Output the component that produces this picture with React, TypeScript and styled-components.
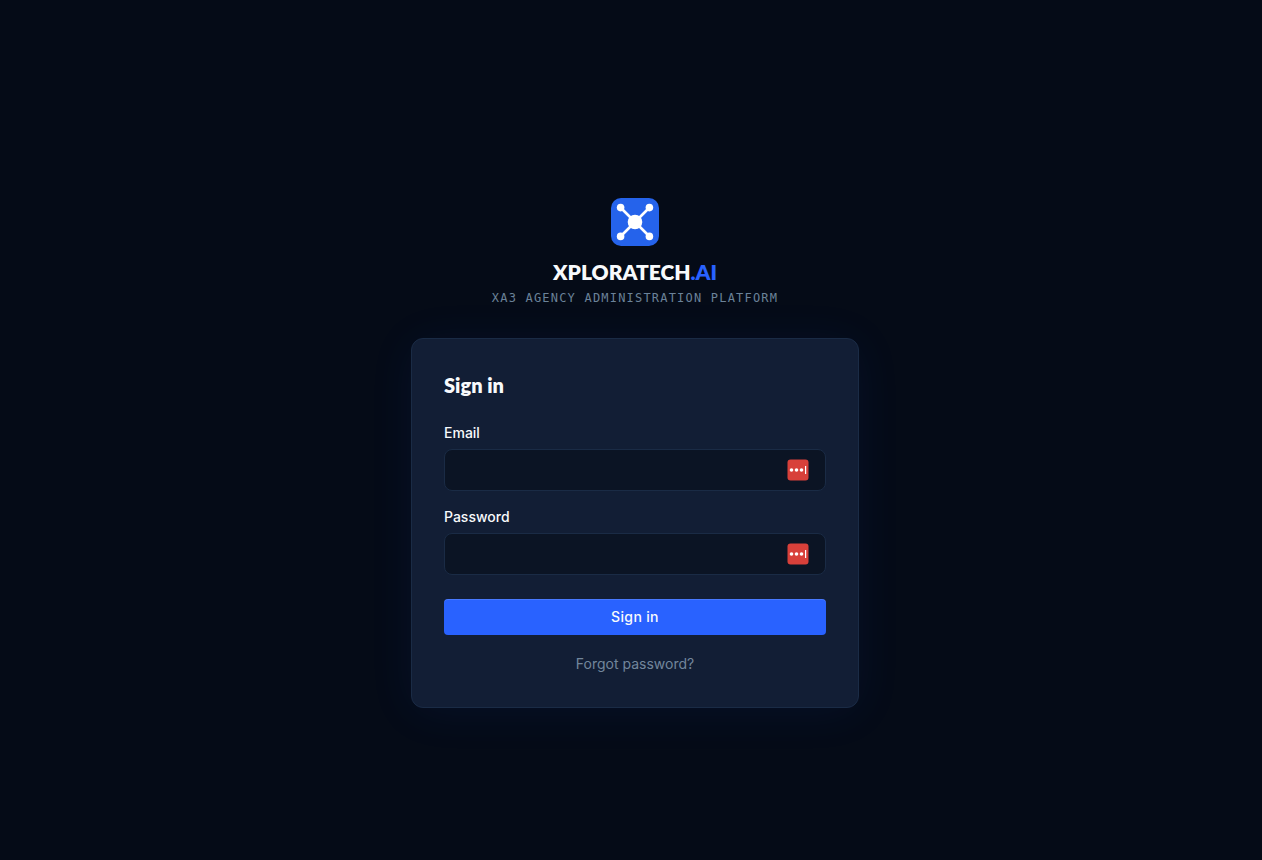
import React from "react";
import styled, { createGlobalStyle } from "styled-components";

const GlobalStyle = createGlobalStyle`
  *, *::before, *::after { box-sizing: border-box; }
  body {
    margin: 0;
    background: #050b17;
    color: #f8fafc;
    font-family: Inter, "Liberation Sans", sans-serif;
    font-size: 14px;
    line-height: 20px;
  }
`;

const Page = styled.main`
  min-height: 100vh;
  display: flex;
  flex-direction: column;
  align-items: center;
  justify-content: center;
  padding: 46px 0 0 8px;
`;

const Brand = styled.header`
  display: flex;
  flex-direction: column;
  align-items: center;
  margin-bottom: 32px;
`;

const Logo = styled.svg`
  width: 48px;
  height: 48px;
  margin-bottom: 12px;
`;

const BrandName = styled.div`
  font-family: Lato, sans-serif;
  font-size: 21px;
  font-weight: 800;
  line-height: 28px;
`;

const BrandAccent = styled.span`
  color: #2962ff;
`;

const Tagline = styled.p`
  margin: 4px 0 0;
  font-family: "DejaVu Sans Mono", monospace;
  font-size: 12px;
  line-height: 16px;
  letter-spacing: 0.1em;
  text-transform: uppercase;
  color: #6b8299;
`;

const Card = styled.section`
  width: 100%;
  max-width: 448px;
  padding: 32px;
  border: 1px solid #1a2b45;
  border-radius: 12px;
  background: #121e35;
  box-shadow: 0 4px 48px rgba(41, 98, 255, 0.07);
`;

const Heading = styled.h1`
  margin: 0 0 24px;
  font-family: Lato, sans-serif;
  font-size: 20px;
  font-weight: 800;
  line-height: 28px;
`;

const Form = styled.form`
  display: flex;
  flex-direction: column;
  gap: 16px;
`;

const Field = styled.div`
  display: flex;
  flex-direction: column;
  gap: 6px;
`;

const Label = styled.label`
  font-weight: 500;
`;

const InputFrame = styled.div`
  display: flex;
  align-items: center;
  height: 42px;
  padding-right: 16px;
  border: 1px solid #1a2b45;
  border-radius: 8px;
  background: #0b1424;
`;

const Input = styled.input`
  flex: 1;
  min-width: 0;
  height: 100%;
  padding: 0 16px;
  border: 0;
  outline: 0;
  background: transparent;
  color: inherit;
  font: inherit;
`;

const FillButton = styled.button`
  display: flex;
  padding: 0;
  border: 0;
  background: transparent;
  cursor: pointer;
`;

const SubmitButton = styled.button`
  height: 36px;
  margin-top: 8px;
  border: 0;
  border-radius: 4px;
  background: #2962ff;
  box-shadow: inset 0 1px 0 rgba(255, 255, 255, 0.15);
  color: #f8fafc;
  font: inherit;
  font-weight: 500;
  letter-spacing: 0.025em;
  cursor: pointer;
`;

const ForgotLink = styled.a`
  display: block;
  margin-top: 18px;
  line-height: 22px;
  text-align: center;
  color: #72869c;
  text-decoration: none;
`;

function PasswordManagerIcon() {
  return (
    <svg width="22" height="22" viewBox="0 0 22 22" aria-hidden="true">
      <rect x="0.5" y="0.5" width="21" height="21" rx="3" fill="#d8403a" />
      <circle cx="4.5" cy="11" r="1.8" fill="#fff" />
      <circle cx="9.5" cy="11" r="1.8" fill="#fff" />
      <circle cx="14.5" cy="11" r="1.8" fill="#fff" />
      <rect x="18" y="7" width="1.2" height="8" fill="#fff" />
    </svg>
  );
}

type CredentialProps = { id: string; label: string; type: string };

function Credential({ id, label, type }: CredentialProps) {
  return (
    <Field>
      <Label htmlFor={id}>{label}</Label>
      <InputFrame>
        <Input id={id} name={id} type={type} />
        <FillButton type="button" aria-label={`Fill ${label.toLowerCase()}`}>
          <PasswordManagerIcon />
        </FillButton>
      </InputFrame>
    </Field>
  );
}

export default function App() {
  return (
    <>
      <GlobalStyle />
      <Page>
        <Brand>
          <Logo viewBox="0 0 48 48" aria-hidden="true">
            <rect width="48" height="48" rx="10" fill="#2563eb" />
            <path d="M10 10 38 38M38 10 10 38" stroke="#fff" strokeWidth="2.6" />
            <circle cx="24" cy="24" r="7.3" fill="#fff" />
            <circle cx="9.6" cy="9.6" r="3.8" fill="#fff" />
            <circle cx="38.4" cy="9.6" r="3.8" fill="#fff" />
            <circle cx="9.6" cy="38.4" r="3.8" fill="#fff" />
            <circle cx="38.4" cy="38.4" r="3.8" fill="#fff" />
          </Logo>
          <BrandName>
            XPLORATECH<BrandAccent>.AI</BrandAccent>
          </BrandName>
          <Tagline>XA3 Agency Administration Platform</Tagline>
        </Brand>
        <Card>
          <Heading>Sign in</Heading>
          <Form onSubmit={(event) => event.preventDefault()}>
            <Credential id="email" label="Email" type="email" />
            <Credential id="password" label="Password" type="password" />
            <SubmitButton type="submit">Sign in</SubmitButton>
          </Form>
          <ForgotLink href="#forgot">Forgot password?</ForgotLink>
        </Card>
      </Page>
    </>
  );
}
